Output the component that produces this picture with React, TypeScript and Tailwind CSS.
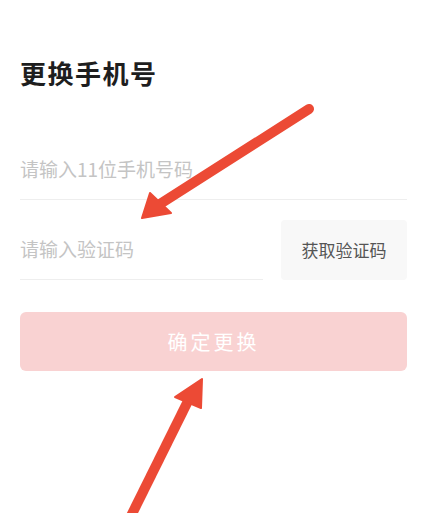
import React from "react";

export default function App() {
  return (
    <div
      className="relative w-[433px] h-[513px] overflow-hidden bg-white pl-[20px] pr-[26px]"
      style={{ fontFamily: '"Noto Sans CJK SC", "Noto Sans", sans-serif' }}
    >
      <h1 className="pt-[54px] text-[26px] leading-[38px] font-bold text-[#1e1e1e] tracking-[1.5px]">
        更换手机号
      </h1>

      <div className="mt-[48px] h-[60px] flex items-center border-b border-[#eeeeee]">
        <input
          className="w-full bg-transparent outline-none text-[19px] text-[#333] placeholder:text-[#c4c4c4]"
          placeholder="请输入11位手机号码"
        />
      </div>

      <div className="mt-[20px] flex gap-[18px]">
        <div className="flex-1 h-[60px] flex items-center border-b border-[#eeeeee]">
          <input
            className="w-full bg-transparent outline-none text-[19px] text-[#333] placeholder:text-[#c4c4c4]"
            placeholder="请输入验证码"
          />
        </div>
        <button className="w-[126px] h-[60px] rounded-[4px] bg-[#f8f8f8] text-[17px] text-[#555]">
          获取验证码
        </button>
      </div>

      <button className="mt-[32px] w-full h-[59px] rounded-[6px] bg-[#f9d2d2] text-white text-[20px] tracking-[3px]">
        确定更换
      </button>

      <svg
        className="absolute left-0 top-0 pointer-events-none"
        width="433"
        height="513"
        viewBox="0 0 433 513"
      >
        <g fill="#ec4a35" stroke="#ec4a35" strokeLinejoin="round">
          <line x1="309" y1="109" x2="160" y2="204" strokeWidth="10" strokeLinecap="round" />
          <polygon points="142,218 150,193 171,213" strokeWidth="2" />
          <line x1="129" y1="520" x2="190" y2="397" strokeWidth="10" />
          <polygon points="202,379 175,397 201,408" strokeWidth="2" />
        </g>
      </svg>
    </div>
  );
}
